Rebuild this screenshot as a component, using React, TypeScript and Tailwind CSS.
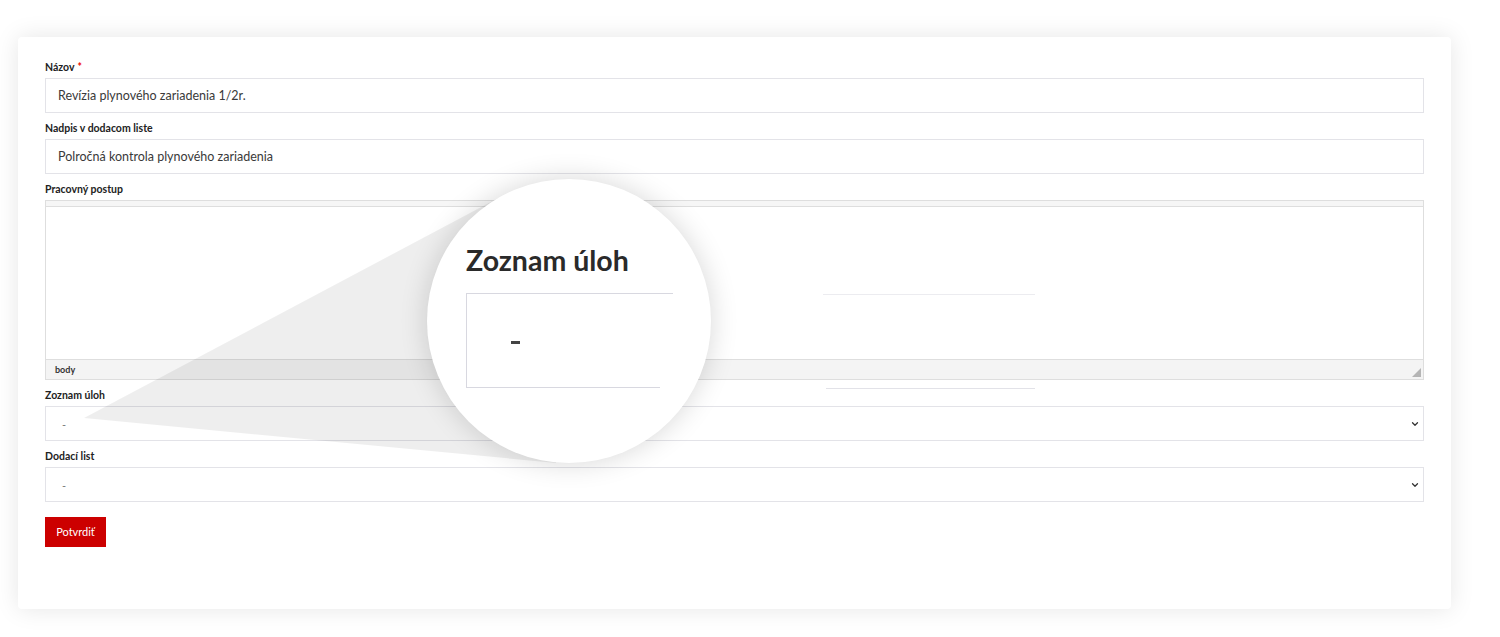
import { ChevronDown } from 'lucide-react'

const font = { fontFamily: 'Lato, "Noto Sans", sans-serif' }

function Label({ text, required }: { text: string; required?: boolean }) {
  return (
    <div className="mt-[8px] mb-[4px] h-[14px] text-[10.5px] leading-[14px] font-bold text-[#222]">
      {text}
      {required && <span className="text-[#e00] ml-[3px]">*</span>}
    </div>
  )
}

function TextInput({ value }: { value: string }) {
  return (
    <div className="h-[35px] border border-[#e3e3e8] flex items-center pl-[12px] pt-[2px] text-[12.5px] text-[#3a3a3a]">
      {value}
    </div>
  )
}

function Select() {
  return (
    <div className="h-[35px] border border-[#e3e3e8] flex items-center justify-between pl-[16px] pr-[3px] text-[11px] text-[#777]">
      <span className="mt-[3px]">-</span>
      <ChevronDown className="w-[10px] h-[10px] text-[#333]" strokeWidth={3} />
    </div>
  )
}

function Editor() {
  return (
    <div className="h-[180px] border border-[#dedede] flex flex-col">
      <div className="h-[6px] bg-[#f6f6f6] border-b border-[#dedede]" />
      <div className="flex-1 bg-white" />
      <div className="h-[20px] bg-[#f4f4f4] border-t border-[#dedede] flex items-center justify-between pl-[9px] pr-[2px]">
        <span className="text-[9px] font-bold text-[#333]">body</span>
        <svg width="9" height="9" viewBox="0 0 9 9" className="mt-[6px]">
          <polygon points="9,0 9,9 0,9" fill="#b5b5b5" />
        </svg>
      </div>
    </div>
  )
}

function Magnifier() {
  return (
    <div className="absolute inset-0 pointer-events-none">
      <svg className="absolute left-0 top-0" width="1500" height="637">
        <polygon points="84,418 502,196 569,321 556,463" fill="rgba(0,0,0,0.065)" />
      </svg>
      <div className="absolute left-[823px] top-[294px] w-[212px] h-px bg-[#ececf0]" />
      <div className="absolute left-[826px] top-[388px] w-[209px] h-px bg-[#e2e2e8]" />
      <div className="absolute left-[427px] top-[179px] w-[284px] h-[284px] rounded-full bg-white shadow-[0_0_28px_rgba(0,0,0,0.16)] pl-[39px] pt-[64px]">
        <div className="text-[28.5px] leading-[34px] font-bold text-[#2a2a2a]">Zoznam úloh</div>
        <div className="relative mt-[16px] h-[95px] border-l border-[#d8d8e0]">
          <div className="absolute left-0 top-0 w-[206px] h-px bg-[#d8d8e0]" />
          <div className="absolute left-0 bottom-0 w-[193px] h-px bg-[#d8d8e0]" />
          <div className="absolute left-[44px] top-[48px] w-[9px] h-[3px] bg-[#444]" />
        </div>
      </div>
    </div>
  )
}

export default function App() {
  return (
    <div className="relative w-[1500px] h-[637px] bg-white overflow-hidden" style={font}>
      <div className="pt-[37px] pl-[18px]">
        <div className="w-[1433px] h-[572px] bg-white rounded-[4px] shadow-[0_0_24px_rgba(0,0,0,0.1)] pt-[15px] px-[27px]">
          <Label text="Názov" required />
          <TextInput value="Revízia plynového zariadenia 1/2r." />
          <Label text="Nadpis v dodacom liste" />
          <TextInput value="Polročná kontrola plynového zariadenia" />
          <Label text="Pracovný postup" />
          <Editor />
          <Label text="Zoznam úloh" />
          <Select />
          <Label text="Dodací list" />
          <Select />
          <button className="mt-[15px] h-[30px] w-[61px] bg-[#cc0000] text-white text-[11px] flex items-center justify-center">
            Potvrdiť
          </button>
        </div>
      </div>
      <Magnifier />
    </div>
  )
}
